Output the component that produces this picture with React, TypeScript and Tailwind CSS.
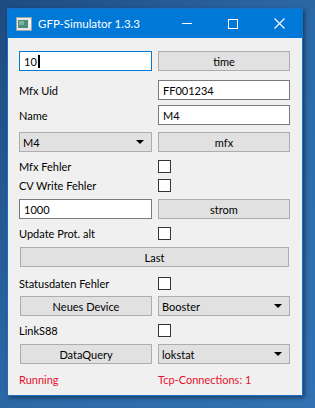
import React from "react";

const font = { fontFamily: 'Lato, "Noto Sans", sans-serif' };

function Check() {
  return <div className="w-[13px] h-[13px] bg-white border border-[#333333]" />;
}

function Btn({ label }: { label: string }) {
  return (
    <div className="w-full h-[20px] bg-[#e1e1e1] border border-[#adadad] flex items-center justify-center text-[11px] text-black leading-none">
      {label}
    </div>
  );
}

function Input({ value, focus = false }: { value: string; focus?: boolean }) {
  return (
    <div
      className={
        "w-full h-[20px] bg-white border flex items-center pl-[4px] text-[11px] text-black leading-none " +
        (focus ? "border-[#0078d7]" : "border-[#7a7a7a]")
      }
    >
      <span>{value}</span>
      {focus && <span className="ml-[1px] w-[2px] h-[13px] bg-black" />}
    </div>
  );
}

function Combo({ value }: { value: string }) {
  return (
    <div className="w-full h-[20px] bg-[#e1e1e1] border border-[#adadad] flex items-center pl-[3px] pr-[7px] text-[11px] text-black leading-none">
      <span className="flex-1">{value}</span>
      <svg width="8" height="4" viewBox="0 0 8 4">
        <path d="M0 0 L8 0 L4 4 Z" fill="#000" />
      </svg>
    </div>
  );
}

function Row({
  mt,
  h = 20,
  left,
  right,
}: {
  mt: string;
  h?: number;
  left: React.ReactNode;
  right: React.ReactNode;
}) {
  return (
    <div className={"flex items-center " + mt} style={{ height: h }}>
      <div className="w-[133px] flex items-center">{left}</div>
      <div className="w-[132px] ml-[6px] flex items-center">{right}</div>
    </div>
  );
}

function Label({ text }: { text: string }) {
  return <span className="text-[11px] text-black leading-none whitespace-nowrap">{text}</span>;
}

export default function App() {
  return (
    <div
      className="w-[315px] h-[408px] overflow-hidden pt-[8px] pl-[7px] bg-gradient-to-br from-[#1d4b80] via-[#2c68a6] to-[#3272b2]"
      style={font}
    >
      <div className="w-[296px] h-[388px] border border-[#1a6fc0] bg-[#f0f0f0] flex flex-col shadow-[2px_2px_4px_rgba(0,0,0,0.4)]">
        {/* title bar */}
        <div className="h-[29px] bg-[#0078d7] flex items-center text-white">
          <div className="ml-[8px] w-[16px] h-[14px] flex items-center justify-center">
            <svg width="16" height="14" viewBox="0 0 16 14">
              <rect x="0.5" y="0.5" width="15" height="13" fill="#e8e8e8" stroke="#9aa4ad" />
              <rect x="2" y="3" width="10" height="8" fill="#4f8f7a" />
              <rect x="3" y="4" width="5" height="4" fill="#7db39c" />
              <rect x="13" y="3" width="1.5" height="4" fill="#ffffff" />
              <rect x="13" y="8" width="1.5" height="1.5" fill="#ffffff" />
            </svg>
          </div>
          <span className="ml-[6px] text-[11.5px] leading-none">GFP-Simulator 1.3.3</span>
          <div className="flex-1" />
          <div className="w-[46px] h-[29px] flex items-center justify-center">
            <div className="w-[10px] h-[1px] bg-white" />
          </div>
          <div className="w-[46px] h-[29px] flex items-center justify-center">
            <div className="w-[10px] h-[10px] border border-white" />
          </div>
          <div className="w-[46px] h-[29px] flex items-center justify-center">
            <svg width="11" height="11" viewBox="0 0 11 11">
              <path d="M0.5 0.5 L10.5 10.5 M10.5 0.5 L0.5 10.5" stroke="#fff" strokeWidth="1.1" />
            </svg>
          </div>
        </div>

        {/* content */}
        <div className="flex flex-col pl-[11px]">
          <Row mt="mt-[13px]" left={<Input value="10" focus />} right={<Btn label="time" />} />
          <Row mt="mt-[9px]" left={<Label text="Mfx Uid" />} right={<Input value="FF001234" />} />
          <Row mt="mt-[5px]" left={<Label text="Name" />} right={<Input value="M4" />} />
          <Row mt="mt-[7px]" left={<Combo value="M4" />} right={<Btn label="mfx" />} />
          <Row mt="mt-[8px]" h={13} left={<Label text="Mfx Fehler" />} right={<Check />} />
          <Row mt="mt-[6px]" h={13} left={<Label text="CV Write Fehler" />} right={<Check />} />
          <Row mt="mt-[7px]" left={<Input value="1000" />} right={<Btn label="strom" />} />
          <Row mt="mt-[8px]" h={13} left={<Label text="Update Prot. alt" />} right={<Check />} />
          <div className="mt-[7px] w-[270px] pl-[1px]">
            <Btn label="Last" />
          </div>
          <Row mt="mt-[10px]" h={13} left={<Label text="Statusdaten Fehler" />} right={<Check />} />
          <Row mt="mt-[6px]" left={<div className="w-full pl-[1px]"><Btn label="Neues Device" /></div>} right={<Combo value="Booster" />} />
          <Row mt="mt-[8px]" h={13} left={<Label text="LinkS88" />} right={<Check />} />
          <Row mt="mt-[7px]" left={<div className="w-full pl-[1px]"><Btn label="DataQuery" /></div>} right={<Combo value="lokstat" />} />
          <Row
            mt="mt-[8px]"
            h={14}
            left={<span className="text-[11px] text-[#e8112d] leading-none">Running</span>}
            right={<span className="text-[11px] text-[#e8112d] leading-none">Tcp-Connections: 1</span>}
          />
        </div>
      </div>
    </div>
  );
}
